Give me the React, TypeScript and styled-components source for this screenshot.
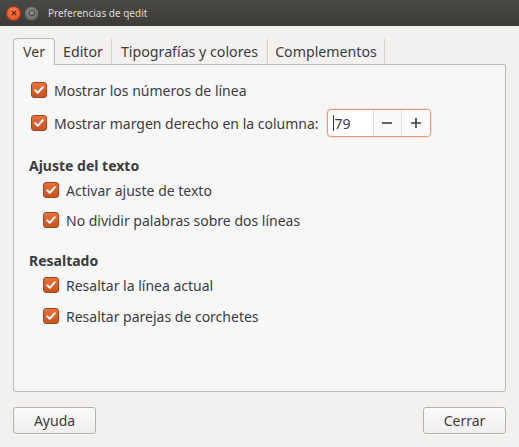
import React from "react";
import styled, { createGlobalStyle } from "styled-components";

const Global = createGlobalStyle`
  html, body { margin: 0; padding: 0; }
  body { width: 519px; height: 447px; overflow: hidden; background: #f2f1f0; font-family: "Noto Sans", "DejaVu Sans", sans-serif; color: #3c3c3c; }
`;

const Window = styled.div`
  width: 519px;
  height: 447px;
  display: flex;
  flex-direction: column;
  background: #f2f1f0;
`;

const TitleBar = styled.div`
  height: 26px;
  flex: none;
  display: flex;
  align-items: center;
  padding-left: 6px;
  gap: 3px;
  background: linear-gradient(#4a4945, #3c3b37);
`;

const WinBtn = styled.div<{ $close?: boolean }>`
  width: 15px;
  height: 15px;
  border-radius: 50%;
  background: ${(p) => (p.$close ? "radial-gradient(circle at 50% 35%, #f5835c, #df4a16)" : "radial-gradient(circle at 50% 35%, #8a8884, #6a6864)")};
  border: 1px solid ${(p) => (p.$close ? "#a83a12" : "#4a4946")};
  display: flex;
  align-items: center;
  justify-content: center;
  box-sizing: border-box;
`;

const Title = styled.div`
  margin-left: 6px;
  font-family: "Noto Sans", sans-serif;
  font-size: 10px;
  color: #dfdbd2;
`;

const Body = styled.div`
  flex: 1;
  display: flex;
  flex-direction: column;
  padding: 12px 13px 0 13px;
`;

const Tabs = styled.div`
  display: flex;
  align-items: flex-end;
  height: 26px;
`;

const Tab = styled.div<{ $active?: boolean; $w: number }>`
  width: ${(p) => p.$w}px;
  box-sizing: border-box;
  height: ${(p) => (p.$active ? 27 : 25)}px;
  display: flex;
  align-items: center;
  justify-content: center;
  font-size: 14.2px;
  color: #3c3c3c;
  background: ${(p) => (p.$active ? "#f7f7f7" : "transparent")};
  border: ${(p) => (p.$active ? "1px solid #bdb9b4" : "none")};
  border-bottom: none;
  border-right: ${(p) => (p.$active ? "1px solid #bdb9b4" : "1px solid #d3d0cc")};
  border-radius: ${(p) => (p.$active ? "4px 4px 0 0" : "0")};
  margin-bottom: ${(p) => (p.$active ? "-1px" : "0")};
  position: relative;
  z-index: ${(p) => (p.$active ? 1 : 0)};
  padding-bottom: 1px;
`;

const Frame = styled.div`
  height: 328px;
  box-sizing: border-box;
  background: #f7f7f7;
  border: 1px solid #bdb9b4;
  border-radius: 0 2px 3px 3px;
  padding: 14px 0 0 17px;
  display: flex;
  flex-direction: column;
`;

const Row = styled.label<{ $indent?: boolean; $h: number }>`
  display: flex;
  align-items: center;
  gap: 7px;
  height: ${(p) => p.$h}px;
  padding-left: ${(p) => (p.$indent ? 12 : 0)}px;
  font-size: 14px;
  color: #3c3c3c;
`;

const Box = styled.span`
  width: 16px;
  height: 16px;
  flex: none;
  box-sizing: border-box;
  border-radius: 3px;
  border: 1px solid #a3441c;
  background: linear-gradient(#e4733f, #c9521f);
  display: flex;
  align-items: center;
  justify-content: center;
`;

const Heading = styled.div<{ $top: number }>`
  font-weight: bold;
  font-size: 14px;
  color: #3c3c3c;
  margin-top: ${(p) => p.$top}px;
  height: 24px;
  display: flex;
  align-items: center;
  margin-left: -2px;
`;

const Spin = styled.div`
  margin-left: 1px;
  width: 104px;
  height: 28px;
  box-sizing: border-box;
  border: 1px solid #e5987c;
  border-radius: 4px;
  background: #ffffff;
  display: flex;
  box-shadow: 0 0 0 1px rgba(240, 170, 140, 0.25);
`;

const SpinValue = styled.div`
  width: 46px;
  display: flex;
  align-items: center;
  padding-left: 5px;
  font-size: 14px;
  color: #3c3c3c;
  box-sizing: border-box;
  border-right: 1px solid #e3e1de;
`;

const Caret = styled.span`
  width: 1px;
  height: 16px;
  background: #3c3c3c;
  margin-right: 1px;
`;

const SpinBtn = styled.div<{ $last?: boolean }>`
  flex: 1;
  display: flex;
  align-items: center;
  justify-content: center;
  border-right: ${(p) => (p.$last ? "none" : "1px solid #e3e1de")};
  background: #fafafa;
  border-radius: ${(p) => (p.$last ? "0 3px 3px 0" : "0")};
`;

const Footer = styled.div`
  display: flex;
  justify-content: space-between;
  margin-top: 15px;
`;

const Button = styled.button`
  width: 83px;
  height: 27px;
  box-sizing: border-box;
  border: 1px solid #b5b1ac;
  border-radius: 3px;
  background: linear-gradient(#fbfbfa, #efeeed);
  font-family: "Noto Sans", sans-serif;
  font-size: 14px;
  color: #3c3c3c;
  padding: 0;
  box-shadow: 0 1px 0 rgba(255,255,255,0.6);
`;

const Check = () => (
  <Box>
    <svg width="12" height="12" viewBox="0 0 12 12">
      <path d="M2.2 6.2 L4.8 8.8 L9.8 3.2" fill="none" stroke="#ffffff" strokeWidth="2" strokeLinecap="round" strokeLinejoin="round" />
    </svg>
  </Box>
);

export default function App() {
  return (
    <Window>
      <Global />
      <TitleBar>
        <WinBtn $close>
          <svg width="6" height="6" viewBox="0 0 6 6">
            <path d="M0.8 0.8 L5.2 5.2 M5.2 0.8 L0.8 5.2" stroke="#5a1a05" strokeWidth="1.1" />
          </svg>
        </WinBtn>
        <WinBtn>
          <svg width="6" height="6" viewBox="0 0 6 6">
            <rect x="0.5" y="0.5" width="5" height="5" rx="1" fill="none" stroke="#4a4946" strokeWidth="1" />
          </svg>
        </WinBtn>
        <Title>Preferencias de qedit</Title>
      </TitleBar>
      <Body>
        <Tabs>
          <Tab $active $w={42}>Ver</Tab>
          <Tab $w={57}>Editor</Tab>
          <Tab $w={156}>Tipografías y colores</Tab>
          <Tab $w={117}>Complementos</Tab>
        </Tabs>
        <Frame>
          <Row $h={22}>
            <Check />
            Mostrar los números de línea
          </Row>
          <Row $h={44}>
            <Check />
            Mostrar margen derecho en la columna:
            <Spin>
              <SpinValue>
                <Caret />
                79
              </SpinValue>
              <SpinBtn>
                <svg width="12" height="12" viewBox="0 0 12 12">
                  <path d="M1 6 H11" stroke="#3c3c3c" strokeWidth="1.6" />
                </svg>
              </SpinBtn>
              <SpinBtn $last>
                <svg width="12" height="12" viewBox="0 0 12 12">
                  <path d="M1 6 H11 M6 1 V11" stroke="#3c3c3c" strokeWidth="1.6" />
                </svg>
              </SpinBtn>
            </Spin>
          </Row>
          <Heading $top={8}>Ajuste del texto</Heading>
          <Row $indent $h={26}>
            <Check />
            Activar ajuste de texto
          </Row>
          <Row $indent $h={34}>
            <Check />
            No dividir palabras sobre dos líneas
          </Row>
          <Heading $top={11}>Resaltado</Heading>
          <Row $indent $h={26}>
            <Check />
            Resaltar la línea actual
          </Row>
          <Row $indent $h={36}>
            <Check />
            Resaltar parejas de corchetes
          </Row>
        </Frame>
        <Footer>
          <Button>Ayuda</Button>
          <Button>Cerrar</Button>
        </Footer>
      </Body>
    </Window>
  );
}
